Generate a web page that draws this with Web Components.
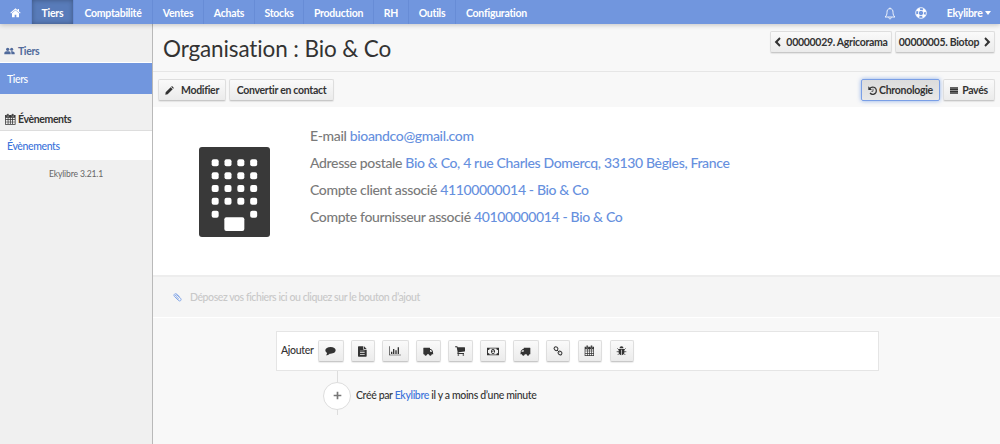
<!DOCTYPE html>
<html lang="fr">
<head>
<meta charset="utf-8">
<title>Organisation : Bio &amp; Co</title>
<style>
body {
    margin: 0;
    font-family: Lato, "Liberation Sans", sans-serif;
    font-size: 10.5px;
    color: #333;
    background: #f8f8f8;
}
time-line b { color: #3a72da; font-weight: 500; }
</style>
</head>
<body>
<eky-app>
    <nav-bar slot="nav">
        <nav-tab style="--w: 32px"><eky-icon name="home"></eky-icon></nav-tab>
        <nav-tab active style="--w: 42px">Tiers</nav-tab>
        <nav-tab style="--w: 79px">Comptabilité</nav-tab>
        <nav-tab style="--w: 51px">Ventes</nav-tab>
        <nav-tab style="--w: 51px">Achats</nav-tab>
        <nav-tab style="--w: 49px">Stocks</nav-tab>
        <nav-tab style="--w: 70px">Production</nav-tab>
        <nav-tab style="--w: 35px">RH</nav-tab>
        <nav-tab style="--w: 47px">Outils</nav-tab>
        <nav-tab last style="--w: 81px">Configuration</nav-tab>
        <eky-icon slot="tools" name="bell"></eky-icon>
        <eky-icon slot="tools" name="help"></eky-icon>
        <span slot="user">Ekylibre</span>
    </nav-bar>

    <side-bar slot="side">
        <side-group icon="users" color="blue">
            <span slot="title">Tiers</span>
            <span slot="item">Tiers</span>
        </side-group>
        <side-group icon="calendarBig">
            <span slot="title">Évènements</span>
            <span slot="item">Évènements</span>
        </side-group>
        <span slot="version">Ekylibre 3.21.1</span>
    </side-bar>

    <page-header>
        <span slot="title">Organisation : Bio &amp; Co</span>
        <eky-button style="--w: 122px"><eky-icon name="left"></eky-icon>00000029. Agricorama</eky-button>
        <eky-button style="--w: 100px">00000005. Biotop<eky-icon name="right"></eky-icon></eky-button>
    </page-header>

    <tool-bar>
        <eky-button style="--w: 68px; --gap: 7px"><eky-icon name="pencil"></eky-icon>Modifier</eky-button>
        <eky-button style="--w: 105px">Convertir en contact</eky-button>
        <eky-button slot="right" pressed style="--w: 79px; --gap: 2px"><eky-icon name="history"></eky-icon>Chronologie</eky-button>
        <eky-button slot="right" style="--w: 52px; --gap: 4px"><eky-icon name="list"></eky-icon>Pavés</eky-button>
    </tool-bar>

    <entity-card>
        <info-line label="E-mail">bioandco@gmail.com</info-line>
        <info-line label="Adresse postale">Bio &amp; Co, 4 rue Charles Domercq, 33130 Bègles, France</info-line>
        <info-line label="Compte client associé">41100000014 - Bio &amp; Co</info-line>
        <info-line label="Compte fournisseur associé">40100000014 - Bio &amp; Co</info-line>
    </entity-card>

    <drop-zone>Déposez vos fichiers ici ou cliquez sur le bouton d’ajout</drop-zone>

    <time-line>
        <span slot="label">Ajouter</span>
        <eky-button style="--w: 25.6px"><eky-icon name="comment"></eky-icon></eky-button>
        <eky-button style="--w: 23.6px"><eky-icon name="file"></eky-icon></eky-button>
        <eky-button style="--w: 26.8px"><eky-icon name="chart"></eky-icon></eky-button>
        <eky-button style="--w: 25.2px"><eky-icon name="truckLeft"></eky-icon></eky-button>
        <eky-button style="--w: 24.7px"><eky-icon name="cart"></eky-icon></eky-button>
        <eky-button style="--w: 26px"><eky-icon name="money"></eky-icon></eky-button>
        <eky-button style="--w: 25.6px"><eky-icon name="truck"></eky-icon></eky-button>
        <eky-button style="--w: 24.5px"><eky-icon name="link"></eky-icon></eky-button>
        <eky-button style="--w: 24.7px"><eky-icon name="calendar"></eky-icon></eky-button>
        <eky-button style="--w: 24.7px"><eky-icon name="bug"></eky-icon></eky-button>
        <span slot="event">Créé par <b>Ekylibre</b> il y a moins d’une minute</span>
    </time-line>
</eky-app>

<script>
// Icons: width and height in px, viewBox is three units per px
const calendarShape = `
    <path fill-rule="evenodd" d="M2 5h28v28H2zM4 13v4h5v-4zM11 13v4h4v-4zM17 13v4h4v-4zM23 13v4h5v-4zM4 19v5h5v-5zM11 19v5h4v-5zM17 19v5h4v-5zM23 19v5h5v-5zM4 26v5h5v-5zM11 26v5h4v-5zM17 26v5h4v-5zM23 26v5h5v-5z"/>
    <rect x="7" y="1" width="5" height="9" rx="2" stroke="#eee" stroke-width="1"/>
    <rect x="20" y="1" width="5" height="9" rx="2" stroke="#eee" stroke-width="1"/>`;

const truckShape = `
    <path fill-rule="evenodd" d="M12 2h18q1 0 1 1v18q0 1-1 1h-2a4 4 0 0 1-8 0h-6a4 4 0 0 1-8 0H2q-1 0-1-1.500l1-2v-5q0-1.500 1-2.500l4-4q1-1 2.500-1H11V3q0-1 1-1zM4.500 13v1H11V9H8.500z"/>
    <circle cx="10" cy="22" r="3"/><circle cx="24" cy="22" r="3"/>`;

const icons = {
    home: [11, 10, `<path d="M16.500 1 1 14.500l2 2L16.500 5 30 16.500l2-2-5-4.300V3h-4v3.700z"/><path d="M16.500 7 6 16v12h8v-8h5v8h8V16z"/>`],
    bell: [12, 13, `<path fill="none" stroke="currentColor" stroke-width="2.600" d="M18 5C11 5 9 10 9 16c0 7-2 11-6 14h30c-4-3-6-7-6-14 0-6-2-11-9-11z"/><path fill="none" stroke="currentColor" stroke-width="2.400" d="M14 31c0 6 8 6 8 0"/><circle cx="18" cy="3.500" r="2"/>`],
    help: [12, 12, `<circle cx="18" cy="18" r="16" fill="none" stroke="currentColor" stroke-width="2.500"/><circle cx="18" cy="18" r="8" fill="none" stroke="currentColor" stroke-width="2.500"/><circle cx="18" cy="18" r="12" fill="none" stroke="currentColor" stroke-width="8" stroke-dasharray="9.425 9.425" stroke-dashoffset="-4.700"/>`],
    users: [11, 8, `<circle cx="11" cy="7" r="5"/><circle cx="23" cy="7" r="4.500"/><path d="M1 22v-4c0-4 6-5 10-5s9 1 9 5v4zM22 22v-4q0-3-2-5c5-.5 12 1 12 5v4z"/>`],
    calendarBig: [12, 12, `<g transform="translate(1 1) scale(1.120 1.040)">${calendarShape}</g>`],
    calendar: [11, 12, calendarShape],
    left: [7, 10, `<path d="M16 1 2 15l14 14 4-4-9-10 9-10z"/>`],
    right: [7, 10, `<path d="M5 1l14 14L5 29l-4-4 9-10L1 5z"/>`],
    pencil: [9, 9, `<path d="m1 26 1-7L17 4l6 6L8 25zM18.500 2.500l1.500-1.500q1-1 2 0l4 4q1 1 0 2L24.500 8.500z"/>`],
    history: [9, 9, `<path fill="none" stroke="currentColor" stroke-width="3.500" d="M5 8C12-1 25 4 25 14c0 11-13 14-19 7"/><path d="M1 1v11h11z"/><path fill="none" stroke="currentColor" stroke-width="2.200" d="M15 8v8h-5"/>`],
    list: [8, 7, `<path d="M0 1h24v4H0zM0 6h24v4H0zM0 11h24v4H0zM0 16h24v4H0z"/>`],
    clip: [9, 9, `<g fill="none" stroke="currentColor" stroke-width="2.800" stroke-linecap="round"><path d="M19 11 11 3.500C7-.5 0 5 4 10l12 12c5 5 11-1 7-6L12 6c-3-2-6 1-4 3l9 9"/></g>`],
    comment: [11, 10, `<path d="M17 3c9 0 15 4 15 10s-6 10-15 10h-3c-3 3-7 5-11 5 2-2 3-4 3-7-3-2-5-5-5-8C1 7 8 3 17 3z"/>`],
    file: [9, 11, `<path fill-rule="evenodd" d="M2 1h14v10h10v19q0 2-2 2H2q-2 0-2-2V3q0-2 2-2zM6 14v2h14v-2zM6 19v2h14v-2zM6 24v2h14v-2z"/><path d="M18 1l8 8h-8z"/>`],
    chart: [12, 10, `<path d="M0 1h2v25h34v2H0zM6 17h4v7H6zM12 9h4v15h-4zM19 13h4v11h-4zM26 4h4v20h-4z"/>`],
    truckLeft: [11, 9, `<g transform="translate(32 0) scale(-1 1)">${truckShape}</g>`],
    truck: [11, 9, truckShape],
    cart: [10, 10, `<path d="M0 2q0-1 1-1h5q2 0 2 3h21q1 0 1 1v10q0 1-1 1.500L11 19l-.5 2H27v3H8q-2-1-1-3l1-2L5 4H1Q0 4 0 2z"/><circle cx="10" cy="27" r="2.500"/><circle cx="25" cy="27" r="2.500"/>`],
    money: [12, 9, `<path fill-rule="evenodd" d="M0 2h36v23H0zM3 9v9q5 0 5 4.500h20q0-4.500 5-4.500V9q-5 0-5-4.500H8Q8 9 3 9z"/><path fill-rule="evenodd" d="M18 6a6 7.500 0 1 0 .1 0zM16 10h4v6h2v2h-7v-2h2v-4h-2z"/>`],
    link: [10, 10, `<g fill="none" stroke="currentColor" stroke-width="3"><rect x="3" y="3" width="12" height="10" rx="5" transform="rotate(42 9 8)"/><rect x="15" y="16" width="12" height="10" rx="5" transform="rotate(42 21 21)"/><path d="m12 12 7 7"/></g>`],
    bug: [11, 10, `<path d="M10.500 7a6 6 0 0 1 12 0zM8 9h17v12q-2 6-7.500 6.500V11h-2v16.500Q10 27 8 21z"/><path fill="none" stroke="currentColor" stroke-width="2.200" d="M9 12 4 7M24 12l5-5M9 17H2m22 0h7M10 22l-5 5m18-5 5 5"/>`],
    plus: [9, 9, `<path d="M11 2h5v9h9v5h-9v9h-5v-9H2v-5h9z"/>`],
    building: [71, 90, `<rect width="213" height="270" rx="9"/>
        <g fill="#fff">${[0, 1, 2, 3, 4].map(row => [0, 1, 2, 3].map(col =>
            row == 4 && (col == 1 || col == 2) ? '' : `<rect x="${38 + col * 38.5}" y="${37 + row * 38.5}" width="21" height="21" rx="6"/>`).join('')).join('')}
        <rect x="76" y="211" width="60" height="41" rx="6"/></g>`],
};

// Small helper, every element gets an open shadow root
function define(name, html) {
    customElements.define(name, class extends HTMLElement {
        constructor() {
            super();
            const template = document.createElement('template');
            template.innerHTML = typeof html === 'function' ? html(this) : html;
            this.attachShadow({ mode: 'open' }).appendChild(template.content.cloneNode(true));
        }
    });
}

define('eky-icon', el => {
    const [w, h, shape] = icons[el.getAttribute('name')];
    return `
<style>
:host { display: inline-flex; flex: none; }
svg { display: block; overflow: visible; }
</style>
<svg width="${w}" height="${h}" viewBox="0 0 ${w * 3} ${h * 3}" fill="currentColor">${shape}</svg>`;
});

define('eky-button', `
<style>
:host {
    display: inline-flex;
    flex: none;
    align-items: center;
    justify-content: center;
    gap: var(--gap, 5px);
    box-sizing: border-box;
    width: var(--w);
    height: 22px;
    border: 1px solid #dedede;
    border-bottom-color: #c8c8c8;
    border-radius: 2px;
    background: linear-gradient(#fafafa, #ebebeb);
    box-shadow: 0 1px 1px rgba(0, 0, 0, .08);
    font-size: 10.5px;
    font-weight: 700;
    letter-spacing: -.29px;
    white-space: nowrap;
}
:host([pressed]) {
    border-color: #7a9fe6;
    background: linear-gradient(#dcdcdc, #e8e8e8);
    box-shadow: 0 0 4px rgba(100, 145, 225, .7);
}
</style>
<slot></slot>`);

define('eky-app', `
<style>
:host {
    display: grid;
    grid-template: 24px 420px / 153px 1fr;
    height: 444px;
    overflow: hidden;
}
header { grid-column: 1 / 3; z-index: 1; }
main { display: flex; flex-direction: column; min-width: 0; }
</style>
<header><slot name="nav"></slot></header>
<slot name="side"></slot>
<main><slot></slot></main>`);

define('nav-bar', `
<style>
:host {
    display: flex;
    align-items: center;
    height: 24px;
    background: #7196de;
    box-shadow: 0 1px 5px rgba(0, 0, 0, .22);
    color: #fff;
    font-weight: 700;
    font-size: 10.5px;
    letter-spacing: -.25px;
}
.tools { display: flex; align-items: center; gap: 19px; margin-left: auto; padding: 2px 19.5px 0 0; }
.user { display: flex; align-items: center; gap: 2px; padding: 1px 9.500px 0 0; }
.caret { border: 3.500px solid transparent; border-top: 4px solid #fff; border-bottom: 0; }
</style>
<slot></slot>
<div class="tools"><slot name="tools"></slot></div>
<div class="user"><slot name="user"></slot><i class="caret"></i></div>`);

define('nav-tab', `
<style>
:host {
    display: flex;
    align-items: center;
    justify-content: center;
    box-sizing: border-box;
    width: var(--w);
    height: 24px;
    padding-top: 1px;
    border-right: 1px solid #678cd6;
}
:host([active]) {
    background: #587bb9;
    box-shadow: inset 0 0 5px rgba(0, 0, 0, .3);
}
:host([last]) { border-right: 0; }
</style>
<slot></slot>`);

define('side-bar', `
<style>
:host {
    display: block;
    box-sizing: border-box;
    border-right: 1px solid #b9b9b9;
    background: #f0f0f0;
}
.version { padding-top: 9px; text-align: center; font-size: 8.600px; letter-spacing: -.15px; line-height: 11px; color: #666; }
</style>
<slot></slot>
<div class="version"><slot name="version"></slot></div>`);

define('side-group', el => `
<style>
:host { display: block; }
.title {
    display: flex;
    align-items: flex-end;
    gap: 2px;
    box-sizing: border-box;
    height: 37px;
    padding: 0 4px 3px;
    border-bottom: 1px solid #ddd;
    font-weight: 700;
    font-size: 10.500px;
    letter-spacing: -.38px;
    line-height: 15px;
}
.title eky-icon { padding-bottom: 2px; }
.item {
    display: flex;
    align-items: center;
    box-sizing: border-box;
    height: 29px;
    padding-left: 7px;
    background: #fff;
    color: #3a72da;
    font-size: 10.500px;
    font-weight: 500;
    letter-spacing: -.38px;
}
:host([color=blue]) .title { height: 39px; gap: 3px; border-bottom-color: #fff; color: #506a9b; }
:host([color=blue]) .title eky-icon { padding-bottom: 4px; }
:host([color=blue]) .item { height: 31px; background: #7196de; color: #fff; }
</style>
<div class="title"><eky-icon name="${el.getAttribute('icon')}"></eky-icon><slot name="title"></slot></div>
<div class="item"><slot name="item"></slot></div>`);

define('page-header', `
<style>
:host {
    display: flex;
    box-sizing: border-box;
    height: 48px;
    padding: 7px 5px 0 10px;
    border-bottom: 1px solid #e6e6e6;
}
h1 { flex: 1; margin: 0; font-size: 22.500px; letter-spacing: -.12px; line-height: 36px; font-weight: 400; font-variant-ligatures: none; }
.nav { display: flex; gap: 3px; }
</style>
<h1><slot name="title"></slot></h1>
<div class="nav"><slot></slot></div>`);

define('tool-bar', `
<style>
:host {
    display: flex;
    justify-content: space-between;
    box-sizing: border-box;
    height: 35px;
    padding: 7px 5px 0;
}
div { display: flex; gap: 3px; }
</style>
<div><slot></slot></div>
<div><slot name="right"></slot></div>`);

define('entity-card', `
<style>
:host {
    display: flex;
    box-sizing: border-box;
    height: 170px;
    border-bottom: 2px solid #ededed;
    background: #fff;
}
.picture { width: 157px; padding: 40px 0 0 46px; box-sizing: border-box; color: #393939; }
.lines { padding-top: 15px; }
</style>
<div class="picture"><eky-icon name="building"></eky-icon></div>
<div class="lines"><slot></slot></div>`);

define('info-line', el => `
<style>
:host {
    display: block;
    height: 27px;
    line-height: 27px;
    font-size: 14px;
    font-weight: 500;
    letter-spacing: -.35px;
    color: #7a7a7a;
    white-space: nowrap;
}
a { color: #6690de; }
</style>
<span>${el.getAttribute('label')}</span> <a><slot></slot></a>`);

define('drop-zone', `
<style>
:host {
    display: flex;
    align-items: center;
    gap: 8px;
    box-sizing: border-box;
    height: 41px;
    padding-left: 20px;
    border-bottom: 1px solid #fff;
    background: #f5f5f5;
    color: #c8c8c8;
    font-size: 10.500px;
    font-weight: 500;
    letter-spacing: -.43px;
}
eky-icon { color: #7ba0e6; }
</style>
<eky-icon name="clip"></eky-icon>
<span><slot></slot></span>`);

define('time-line', `
<style>
:host { display: block; padding: 13px 0 0 123px; }
.add {
    display: flex;
    align-items: center;
    gap: 7.200px;
    box-sizing: border-box;
    width: 603px;
    height: 40px;
    padding-left: 4px;
    border: 1px solid #e5e5e5;
    background: #fff;
    font-size: 10.500px;
    font-weight: 500;
    letter-spacing: -.3px;
}
.label { width: 30px; padding-bottom: 2px; white-space: nowrap; }
.event {
    display: grid;
    grid-template-columns: 28px 1fr;
    grid-template-rows: 11px 27px 6px;
    column-gap: 5px;
    align-items: center;
    margin-left: 47px;
    font-size: 10.500px;
    font-weight: 500;
    letter-spacing: -.35px;
}
.text { padding-bottom: 2px; }
.line { grid-column: 1; justify-self: center; width: 1px; height: 100%; background: #ddd; }
.dot {
    grid-column: 1;
    display: flex;
    align-items: center;
    justify-content: center;
    box-sizing: border-box;
    width: 28px;
    height: 28px;
    border: 1px solid #ddd;
    border-radius: 50%;
    background: #fff;
    color: #777;
}
</style>
<div class="add"><div class="label"><slot name="label"></slot></div><slot></slot></div>
<div class="event">
    <i class="line"></i>
    <div class="dot"><eky-icon name="plus"></eky-icon></div>
    <div class="text"><slot name="event"></slot></div>
    <i class="line"></i>
</div>`);
</script>
</body>
</html>
